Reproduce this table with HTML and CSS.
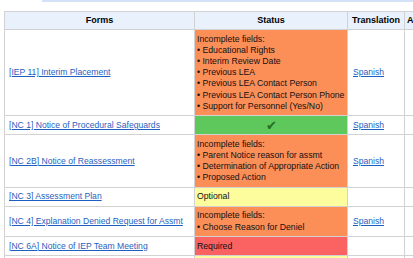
FILE: index.html
```html
<!DOCTYPE html>
<html>
<head>
<meta charset="utf-8">
<link rel="stylesheet" href="styles.css">
</head>
<body>
<div class="topbar"></div>
<table class="grid">
  <colgroup>
    <col class="c-forms"><col class="c-status"><col class="c-trans"><col class="c-extra">
  </colgroup>
  <thead>
    <tr><th>Forms</th><th>Status</th><th>Translation</th><th class="th-a">A</th></tr>
  </thead>
  <tbody>
    <tr>
      <td class="form"><a href="#">[IEP 11] Interim Placement</a></td>
      <td class="st orange">Incomplete fields:<br>• Educational Rights<br>• Interim Review Date<br>• Previous LEA<br>• Previous LEA Contact Person<br>• Previous LEA Contact Person Phone<br>• Support for Personnel (Yes/No)</td>
      <td class="tr"><a href="#">Spanish</a></td>
      <td></td>
    </tr>
    <tr>
      <td class="form"><a href="#">[NC 1] Notice of Procedural Safeguards</a></td>
      <td class="st green ok">✔</td>
      <td class="tr"><a href="#">Spanish</a></td>
      <td></td>
    </tr>
    <tr>
      <td class="form"><a href="#">[NC 2B] Notice of Reassessment</a></td>
      <td class="st orange">Incomplete fields:<br>• Parent Notice reason for assmt<br>• Determination of Appropriate Action<br>• Proposed Action</td>
      <td class="tr"><a href="#">Spanish</a></td>
      <td></td>
    </tr>
    <tr>
      <td class="form"><a href="#">[NC 3] Assessment Plan</a></td>
      <td class="st yellow">Optional</td>
      <td class="tr"></td>
      <td></td>
    </tr>
    <tr>
      <td class="form"><a href="#">[NC 4] Explanation Denied Request for Assmt</a></td>
      <td class="st orange">Incomplete fields:<br>• Choose Reason for Deniel</td>
      <td class="tr"><a href="#">Spanish</a></td>
      <td></td>
    </tr>
    <tr>
      <td class="form"><a href="#">[NC 6A] Notice of IEP Team Meeting</a></td>
      <td class="st red">Required</td>
      <td class="tr"></td>
      <td></td>
    </tr>
    <tr class="partial">
      <td class="form">&nbsp;</td>
      <td class="st yellow">&nbsp;</td>
      <td class="tr">&nbsp;</td>
      <td>&nbsp;</td>
    </tr>
  </tbody>
</table>
</body>
</html>
```
FILE: styles.css
```css
html, body {
  margin: 0;
  padding: 0;
  width: 413px;
  height: 258px;
  overflow: hidden;
  background: #ffffff;
  font-family: "Liberation Sans", Arial, sans-serif;
}
.topbar {
  margin-left: 42px;
  height: 2px;
  background: #d3e2f6;
}
.grid {
  margin: 9px 0 0 4px;
  border-collapse: collapse;
  table-layout: fixed;
  width: 450px;
  font-size: 8.6px;
  line-height: 11.2px;
  color: #000;
}
.c-forms { width: 190px; }
.c-status { width: 153px; }
.c-trans { width: 57px; }
.c-extra { width: 50px; }
.grid th, .grid td {
  border: 1px solid #d2d2d2;
  padding: 3.4px 2px;
  vertical-align: middle;
  text-align: left;
  white-space: nowrap;
}
.grid th {
  background: #e9f1fc;
  font-weight: bold;
  font-size: 9px;
  text-align: center;
  padding: 3px 2px;
  height: 11px;
}
.grid th.th-a { text-align: left; padding-left: 2px; }
.grid td.form { padding-left: 4px; }
.grid td.tr { padding-left: 5px; }
.grid a {
  color: #1f5fbf;
  text-decoration: underline;
}
.st {
  border-color: #ececec;
  font-size: 8.7px;
  color: #111;
  padding-left: 1px;
  padding-right: 0;
  overflow: hidden;
}
.orange { background: #fc8e58; }
.green { background: #5ec85c; }
.yellow { background: #fdfd9d; }
.red { background: #fb6262; }
.ok {
  text-align: center !important;
  color: #236f24;
  font-size: 13px;
}
```
